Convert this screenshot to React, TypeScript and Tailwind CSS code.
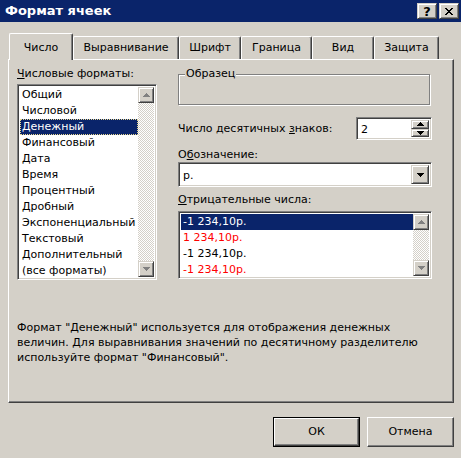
import React from "react";

const raisedBtn =
  "border border-t-white border-l-white border-r-[#404040] border-b-[#404040] shadow-[inset_-1px_-1px_0_#808080]";
const scrollBtn =
  "border border-t-[#D4D0C8] border-l-[#D4D0C8] border-r-[#404040] border-b-[#404040] shadow-[inset_1px_1px_0_#ffffff,inset_-1px_-1px_0_#808080] bg-[#D4D0C8]";
const sunken =
  "border border-t-[#808080] border-l-[#808080] border-r-white border-b-white shadow-[inset_1px_1px_0_#404040,inset_-1px_-1px_0_#D4D0C8]";
const checker =
  "bg-[repeating-conic-gradient(#D4D0C8_0_25%,#ffffff_0_50%)] [background-size:2px_2px]";

function Tri({ dir, color }: { dir: "up" | "down"; color: string }) {
  const rows = dir === "up" ? [1, 3, 5, 7] : [7, 5, 3, 1];
  return (
    <svg width="7" height="4" viewBox="0 0 7 4" shapeRendering="crispEdges">
      {rows.map((w, i) => (
        <rect key={i} x={(7 - w) / 2} y={i} width={w} height={1} fill={color} />
      ))}
    </svg>
  );
}

function ScrollArrow({ dir, disabled }: { dir: "up" | "down"; disabled?: boolean }) {
  return (
    <div className={`w-[16px] h-[16px] shrink-0 flex items-center justify-center ${scrollBtn}`}>
      <Tri dir={dir} color={disabled ? "#808080" : "#000000"} />
    </div>
  );
}

function ScrollBar() {
  return (
    <div className="w-[16px] h-full flex flex-col">
      <ScrollArrow dir="up" disabled />
      <div className={`flex-1 ${checker}`} />
      <ScrollArrow dir="down" disabled />
    </div>
  );
}

const formats = [
  "Общий",
  "Числовой",
  "Денежный",
  "Финансовый",
  "Дата",
  "Время",
  "Процентный",
  "Дробный",
  "Экспоненциальный",
  "Текстовый",
  "Дополнительный",
  "(все форматы)",
];

const negatives = [
  { t: "-1 234,10р.", red: false, sel: true },
  { t: "1 234,10р.", red: true, sel: false },
  { t: "-1 234,10р.", red: false, sel: false },
  { t: "-1 234,10р.", red: true, sel: false },
];

const tabs = [
  { t: "Выравнивание", w: "w-[106px]" },
  { t: "Шрифт", w: "w-[62px]" },
  { t: "Граница", w: "w-[71px]" },
  { t: "Вид", w: "w-[62px]" },
  { t: "Защита", w: "w-[65px]" },
];

export default function App() {
  return (
    <div className="w-[461px] h-[458px] bg-[#D4D0C8] overflow-hidden flex flex-col text-black text-[11px] leading-[14px] font-['DejaVu_Sans',sans-serif]">
      {/* Title bar */}
      <div className="h-[22px] bg-[#0A246A] flex items-start pl-[5px] pr-[2px] shrink-0">
        <div className="flex-1 text-white font-bold text-[13px] leading-[22px]">Формат ячеек</div>
        <div className="flex gap-[2px] mt-[3px]">
          <div className={`w-[20px] h-[16px] bg-[#D4D0C8] flex items-center justify-center ${scrollBtn}`}>
            <span className="font-bold text-[13px] leading-[13px] font-['DejaVu_Sans',sans-serif]">?</span>
          </div>
          <div className={`w-[20px] h-[16px] bg-[#D4D0C8] flex items-center justify-center ${scrollBtn}`}>
            <svg width="8" height="7" viewBox="0 0 8 7" shapeRendering="crispEdges">
              {[0, 1, 2, 3, 4, 5, 6].map((i) => (
                <g key={i}>
                  <rect x={i} y={i} width={2} height={1} fill="#000" />
                  <rect x={6 - i} y={i} width={2} height={1} fill="#000" />
                </g>
              ))}
            </svg>
          </div>
        </div>
      </div>

      {/* Tabs */}
      <div className="mt-[11px] ml-[9px] h-[26px] flex items-end relative z-10 shrink-0">
        <div className="w-[64px] h-[27px] -mb-px bg-[#D4D0C8] border-l border-t border-white border-r border-r-[#404040] rounded-tl-[2px] rounded-tr-[2px] shadow-[inset_-1px_0_0_#808080] flex items-center justify-center pt-[1px]">
          Число
        </div>
        {tabs.map((tab) => (
          <div
            key={tab.t}
            className={`${tab.w} h-[23px] border-l border-t border-white border-r border-r-[#404040] rounded-tl-[2px] rounded-tr-[2px] shadow-[inset_-1px_0_0_#808080] flex items-center justify-center`}
          >
            {tab.t}
          </div>
        ))}
      </div>

      {/* Panel */}
      <div className="ml-[8px] w-[446px] h-[344px] shrink-0 border border-t-white border-l-white border-r-[#404040] border-b-[#404040] shadow-[inset_-1px_-1px_0_#808080] pl-[8px] pt-[7px] flex flex-col">
        <div className="flex gap-[21px]">
          {/* Left column */}
          <div className="w-[140px] flex flex-col">
            <div className="h-[14px]">
              <span className="underline underline-offset-[1px]">Ч</span>исловые форматы:
            </div>
            <div className={`mt-[3px] h-[196px] w-[140px] bg-white flex p-[2px] ${sunken}`}>
              <div className="flex-1 flex flex-col">
                {formats.map((f) => (
                  <div
                    key={f}
                    className={`h-[16px] leading-[16px] pl-[2px] whitespace-nowrap ${
                      f === "Денежный"
                        ? "bg-[#0A246A] text-white outline outline-1 outline-dotted outline-[#e8d890] -outline-offset-1"
                        : ""
                    }`}
                  >
                    {f}
                  </div>
                ))}
              </div>
              <ScrollBar />
            </div>
          </div>

          {/* Right column */}
          <div className="w-[254px] flex flex-col">
            <fieldset className="w-[252px] h-[38px] border border-[#808080] shadow-[inset_1px_1px_0_#ffffff,1px_1px_0_#ffffff] m-0 p-0">
              <legend className="ml-[6px] px-[1px] bg-[#D4D0C8] leading-[14px]">Образец</legend>
            </fieldset>

            <div className="mt-[12px] h-[23px] flex items-center justify-between">
              <div>
                Число десятичных <span className="underline underline-offset-[1px]">з</span>наков:
              </div>
              <div className={`w-[76px] h-[23px] bg-white flex p-[2px] ${sunken}`}>
                <div className="flex-1 pl-[2px] leading-[19px]">2</div>
                <div className="w-[18px] flex flex-col">
                  <div className={`flex-1 flex items-center justify-center ${scrollBtn}`}>
                    <Tri dir="up" color="#000" />
                  </div>
                  <div className={`flex-1 flex items-center justify-center ${scrollBtn}`}>
                    <Tri dir="down" color="#000" />
                  </div>
                </div>
              </div>
            </div>

            <div className="mt-[8px] h-[14px]">
              О<span className="underline underline-offset-[1px]">б</span>означение:
            </div>
            <div className={`h-[25px] w-[254px] bg-white flex p-[2px] ${sunken}`}>
              <div className="flex-1 pl-[2px] leading-[21px]">р.</div>
              <div className={`w-[18px] flex items-center justify-center ${scrollBtn}`}>
                <Tri dir="down" color="#000" />
              </div>
            </div>

            <div className="mt-[6px] h-[14px]">
              <span className="underline underline-offset-[1px]">О</span>трицательные числа:
            </div>
            <div className={`mt-[4px] h-[68px] w-[254px] bg-white flex p-[2px] ${sunken}`}>
              <div className="flex-1 flex flex-col">
                {negatives.map((n, i) => (
                  <div
                    key={i}
                    className={`h-[16px] leading-[16px] pl-[2px] ${
                      n.sel ? "bg-[#0A246A] text-white" : n.red ? "text-[#FF0000]" : "text-black"
                    }`}
                  >
                    {n.t}
                  </div>
                ))}
              </div>
              <ScrollBar />
            </div>
          </div>
        </div>

        <div className="mt-[40px] leading-[15px]">
          Формат "Денежный" используется для отображения денежных
          <br />
          величин. Для выравнивания значений по десятичному разделителю
          <br />
          используйте формат "Финансовый".
        </div>
      </div>

      {/* Buttons */}
      <div className="mt-[14px] flex justify-end gap-[7px] pr-[7px]">
        <div className="w-[87px] h-[30px] border border-black">
          <div className={`w-full h-full flex items-center justify-center ${raisedBtn}`}>ОК</div>
        </div>
        <div className={`w-[87px] h-[30px] flex items-center justify-center ${raisedBtn}`}>Отмена</div>
      </div>
    </div>
  );
}
